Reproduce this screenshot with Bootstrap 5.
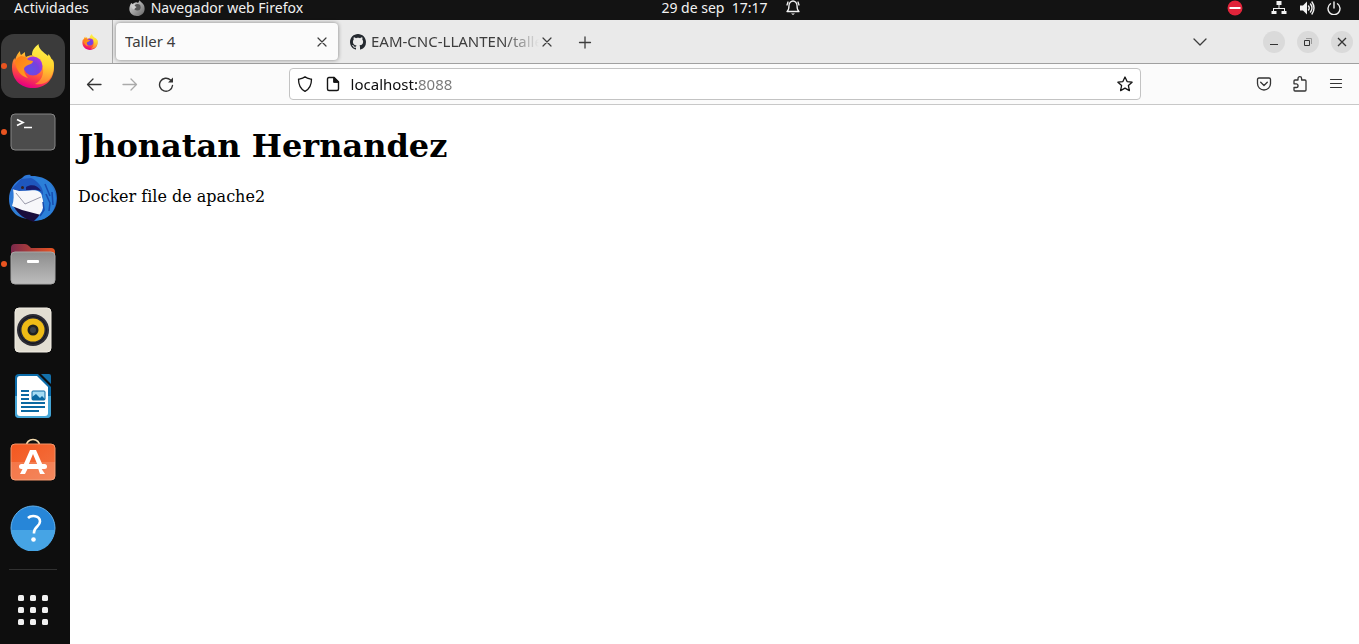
<!DOCTYPE html>
<html lang="es">
<head>
<meta charset="utf-8">
<meta name="viewport" content="width=device-width, initial-scale=1">
<title>Taller 4</title>
<link rel="stylesheet" href="https://cdn.jsdelivr.net/npm/bootstrap@5.3.0/dist/css/bootstrap.min.css">
<style>
  body { font-family: "Noto Sans", "Open Sans", sans-serif; font-size: 14px; background: #0e0e0e; }
  button { border: 0; background: none; padding: 0; color: inherit; display: flex; align-items: center; justify-content: center; }
  svg { display: block; flex: none; }
  .line { fill: none; stroke: currentColor; stroke-linecap: round; stroke-linejoin: round; }

  .topbar { display: grid; grid-template-columns: 1fr auto 1fr; height: 20px; padding: 0 18px 8px 14px; background: #131313; color: #f2f2f2; line-height: 14px; }
  .topbar .clock { gap: 18px; padding-left: 106px; }
  .topbar .app { gap: 6px; margin-left: 40px; }
  .topbar .tray { gap: 12px; }
  .topbar .dnd { margin-right: 16px; }

  .dock { width: 70px; padding-top: 13px; background: #0e0e0e; }
  .dock-item { position: relative; width: 66px; height: 66px; }
  .dock-item.current::before { content: ""; position: absolute; inset: 1px; background: #3b3b3b; border-radius: 13px; }
  .dock-item svg { position: relative; }
  .dock-item.running::after { content: ""; position: absolute; left: 1px; top: 30px; width: 6px; height: 6px; border-radius: 50%; background: #e95420; }
  .dock hr { width: 48px; margin: 8px 0 7px 9px; border-color: #fff; opacity: .15; }

  .window { background: #fff; min-width: 0; }
  .tabstrip { height: 44px; background: #eaeaea; border-bottom: 1px solid #a0a0a0; color: #3d3d3d; font-size: 15px; }
  .pinned { width: 43px; padding-right: 3px; border-right: 1px solid #ababab; }
  .tab { height: 37px; border-radius: 4px; }
  .tab.active { width: 222px; margin-left: 3px; padding: 0 8px 0 9px; background: #fbfbfb; box-shadow: 0 0 4px rgba(0,0,0,.45); }
  .tab.other { width: 217px; padding-left: 12px; gap: 5px; }
  .tab-title { flex: 1; overflow: hidden; white-space: nowrap; }
  .tab.other button { margin-left: -5px; }
  .tab.other .tab-title { -webkit-mask-image: linear-gradient(to left, transparent, #000 36px); mask-image: linear-gradient(to left, transparent, #000 36px); }
  .new-tab { margin-left: 12px; }
  .win-btn { width: 22px; height: 22px; border-radius: 50%; background: #dadada; }
  .tool { width: 36px; height: 36px; }
  .winctl { gap: 12px; padding: 0 6px 0 45px; }

  .toolbar { height: 41px; padding: 0 5px 0 6px; background: #fbfbfb; border-bottom: 1px solid #c8c8c8; color: #333; }
  .spring { flex: 10; }
  .urlbar { flex: 80; height: 32px; padding: 0 7px; background: #fff; border: 1px solid #c3c3c3; border-radius: 4px; gap: 12px; color: #151515; }
  .urlbar input { flex: 1; min-width: 0; border: 0; outline: 0; padding: 0; font-size: 15px; line-height: 20px; margin-left: -2px;
    color: transparent; caret-color: #000; background: linear-gradient(to right, #0c0c0d 66px, #777 66px); -webkit-background-clip: text; background-clip: text; }

  .page { padding: 22px 8px; font-family: "DejaVu Serif", serif; color: #000; font-size: 16px; line-height: 19px; }
  .page h1 { font-size: 32px; line-height: 38px; font-weight: 700; margin-bottom: 22px; }
</style>
</head>
<body class="d-flex flex-column min-vh-100">

<svg width="0" height="0" class="position-absolute" aria-hidden="true">
  <defs>
    <linearGradient id="ffBody" x1=".8" y1=".1" x2=".45" y2="1"><stop offset="0" stop-color="#ffd83a"/><stop offset=".35" stop-color="#ff9a2b"/><stop offset=".65" stop-color="#ff4f3c"/><stop offset="1" stop-color="#e8007f"/></linearGradient>
    <linearGradient id="ffTail" x1=".5" y1="0" x2=".4" y2="1"><stop offset="0" stop-color="#fff34f"/><stop offset=".5" stop-color="#ffd62e"/><stop offset="1" stop-color="#ff7a35"/></linearGradient>
    <radialGradient id="ffGlobe" cx=".4" cy=".7" r=".8"><stop offset="0" stop-color="#5e51e8"/><stop offset=".5" stop-color="#7840dd"/><stop offset="1" stop-color="#b833e1"/></radialGradient>
    <linearGradient id="ffHead" x1="0" y1="0" x2="1" y2="1"><stop offset="0" stop-color="#ff7a16"/><stop offset="1" stop-color="#ffa51f"/></linearGradient>
    <symbol id="firefox" viewBox="0 0 44 44">
      <path fill="url(#ffBody)" d="M1 23c0-4 1-7 2.500-9L4 16c1-4 3-7 5-9 0 2 .500 3 1 4l4-3c0 2 0 4 1 5 3-2 8-2 12-1l6 1 8 2c2 2 2 6 2 8 0 13-9 21-21 21S1 36 1 23z"/>
      <path fill="url(#ffTail)" d="M21 11c0-5 3-8 6.500-11 0 5 5 8 9.500 12l.500-2c2 2 3 5 3.500 7l1-1c2 8 0 15-4 20-4 4-9 5-14 4 6-3 9-9 8-16-1-6-5-9-11-13z"/>
      <circle cx="22" cy="22" r="9.500" fill="url(#ffGlobe)"/>
      <path fill="url(#ffHead)" d="M4 18c1-3 3-5 6-6l5 1 2 3 5 1c0 2-2 3-5 4-2 1-4 2-4 4 0 3 1 6 4 9-8-2-12-9-13-16z"/>
    </symbol>
    <linearGradient id="tbBlue" x1="0" y1="0" x2="1" y2="1"><stop offset="0" stop-color="#2d72d9"/><stop offset=".5" stop-color="#2f7fd5"/><stop offset="1" stop-color="#173f9c"/></linearGradient>
    <linearGradient id="folder"><stop offset="0" stop-color="#7b294c"/><stop offset="1" stop-color="#ea5521"/></linearGradient>
    <linearGradient id="drawer" x2="0" y2="1"><stop offset="0" stop-color="#8c8c8c"/><stop offset="1" stop-color="#bdbdbd"/></linearGradient>
    <linearGradient id="bag" x2="1" y2="1"><stop offset="0" stop-color="#f4571f"/><stop offset="1" stop-color="#f27443"/></linearGradient>
    <linearGradient id="silver" x2="1" y2="1"><stop offset="0" stop-color="#ddd"/><stop offset="1" stop-color="#666"/></linearGradient>
  </defs>
</svg>

<header class="topbar">
  <div class="d-flex align-items-center">
    <button type="button">Actividades</button>
    <button type="button" class="app">
      <svg width="16" height="16" viewBox="0 0 44 44"><path fill="url(#silver)" d="M1 25C1 18 3 14 6 8l4 3 4-3c4-2 8-2 11 0l4-7c3 6 14 8 14 23 0 12-9 20-21 20S1 36 1 25z"/><circle cx="23" cy="20" r="9" fill="#555"/><path fill="#ccc" d="M6 13l12-2-3 5 6 3-8 7c-5-2-7-6-7-13z"/></svg>
      <span>Navegador web Firefox</span>
    </button>
  </div>
  <button type="button" class="clock">
    <span>29 de sep&nbsp; 17:17</span>
    <svg class="line" width="14" height="16" viewBox="0 0 14 16" stroke-width="1.300"><path d="M1 11.500c2-1.500 2-3 2-6C3 3 5 1 7 1s4 2 4 4.500c0 3 0 4.500 2 6zM2 2L1 5M12 2l1 3"/><path d="M5 13.500h4L7 15z" fill="currentColor" stroke="none"/></svg>
  </button>
  <div class="tray d-flex align-items-center justify-content-end">
    <button type="button" class="dnd" aria-label="No molestar"><svg width="16" height="16" viewBox="0 0 16 16"><circle cx="8" cy="8" r="7.500" fill="#e0243a"/><path d="M2.500 8h11" stroke="#fff" stroke-width="2"/></svg></button>
    <button type="button" aria-label="Red"><svg width="16" height="16" viewBox="0 0 16 16" fill="#f2f2f2"><path d="M5.500 1h5v4h-2v3H14v3h1.500v3h-5v-3H13V9H3v2h2.500v3h-5v-3H2V8h5.500V5h-2z"/></svg></button>
    <button type="button" aria-label="Volumen"><svg width="16" height="16" viewBox="0 0 16 16"><path fill="#f2f2f2" d="M1 5.500h3L8 1.500v13l-4-4H1z"/><path class="line" stroke-width="1.400" d="M9.500 6q1.500 2 0 4M11.500 4q3 4 0 8M13 2q4 6 0 12"/></svg></button>
    <button type="button" aria-label="Apagar"><svg class="line" width="14" height="14" viewBox="0 0 14 14" stroke-width="1.400"><path d="M7 1v6M3.500 2.800A6 6 0 1 0 10.500 2.800"/></svg></button>
  </div>
</header>

<div class="d-flex flex-grow-1">
  <nav class="dock d-flex flex-column flex-shrink-0" aria-label="Dock">
    <button type="button" class="dock-item current running" aria-label="Firefox"><svg width="44" height="44"><use href="#firefox"/></svg></button>
    <button type="button" class="dock-item running" aria-label="Terminal"><svg width="46" height="38" viewBox="0 0 46 38"><rect x="1" y="1" width="44" height="36" rx="4" fill="#4c4c4c" stroke="#858585"/><path d="M7 6.500l6 3-6 3M14 14.500h8" fill="none" stroke="#fff" stroke-width="1.700"/></svg></button>
    <button type="button" class="dock-item" aria-label="Thunderbird"><svg width="48" height="48" viewBox="0 0 48 48">
      <path fill="url(#tbBlue)" d="M13 4c2-3 6-4 9-3l-1 1c15-1 27 8 27 22 0 12-7 21-23 23l4-3-5 1C11 46 0 39 0 25 0 16 5 8 13 4z"/>
      <path fill="#1a0d3c" d="M4 31c3 6 8 13 21 17l8-8z"/>
      <path fill="#f7f7fa" d="M4 15C7 16 15 17 23 16c7 0 10 3 10 7 2 5 2 11-1 18L13 36 3 32c2-5 2-12 1-17z"/>
      <path fill="none" stroke="#9a9aaa" d="M7 19l9 11 16-7"/>
      <path fill="#2b7fd8" d="M24 3C36 3 47 12 47 25c0 10-5 18-15 21l-7 1 4-4 4-6c2-5 2-10 1-14-1-7-4-12-10-20z"/>
      <path fill="none" stroke="#174bae" stroke-width="1.500" d="M36 10l5 12M37 20l4 9-1 8M43 18l1 13M34 28l1 8-4 6"/>
      <path fill="#1f57bd" d="M12 5L3 15l7 2c6 0 12-1 16-1 5 0 7 3 8 6 1-8-5-15-12-18z"/>
      <path fill="#181a6b" d="M17 13c5-3 12-2 15 4-5-2-9-1-15-1z"/><circle cx="13.500" cy="13.500" r="1.500" fill="#3a2119"/></svg></button>
    <button type="button" class="dock-item running" aria-label="Archivos"><svg width="46" height="42" viewBox="0 0 46 42"><path fill="url(#folder)" d="M1 16V5q0-4 4-4h10q2 0 4 2l2 2h20q4 0 4 4v8z"/><rect x="1" y="9" width="44" height="32" rx="4" fill="url(#drawer)" stroke="#a7a7a7"/><rect x="17" y="17" width="12" height="3" rx="1" fill="#fff"/></svg></button>
    <button type="button" class="dock-item" aria-label="Rhythmbox"><svg width="38" height="46" viewBox="0 0 38 46"><rect x="1" y="1" width="36" height="44" rx="4" fill="#e2ded2" stroke="#f2eee4"/><circle cx="19" cy="23" r="16" fill="#2c2c35"/><circle cx="19" cy="23" r="13.500" fill="none" stroke="#15151b"/><circle cx="19" cy="23" r="11.500" fill="#eebb16"/><circle cx="19" cy="23" r="5.500" fill="#20211f"/><circle cx="19" cy="23" r="3" fill="#3b4148"/></svg></button>
    <button type="button" class="dock-item" aria-label="LibreOffice Writer"><svg width="38" height="46" viewBox="0 0 38 46"><path fill="#0c6ca9" d="M5 1h19l13 13v27q0 4-4 4H5q-4 0-4-4V5q0-4 4-4z"/><path fill="#45a5d5" d="M1 23v18q0 4 4 4h28q4 0 4-4V23z"/><path fill="#fff" d="M6 3h17l11 11v26q0 3-3 3H6q-3 0-3-3V6q0-3 3-3z"/><path fill="#1470aa" d="M27 1h8q2 0 2 2v8z"/><path stroke="#0b69a2" stroke-width="2" d="M7 18h8M7 22h8M7 26h8M7 30h24M7 34h24M7 38h18"/><rect x="18" y="18" width="13" height="9" rx="1" fill="#a5dcf4" stroke="#0b69a2"/><path fill="#0b69a2" d="M18 27v-3l4-3 4 4 2-2 3 3v1z"/></svg></button>
    <button type="button" class="dock-item" aria-label="Ubuntu Software"><svg width="46" height="50" viewBox="0 0 46 50"><path d="M16 10C16 0 30 0 30 10" fill="none" stroke="#f6dcae" stroke-width="1.700"/><rect x="1" y="7" width="44" height="36" rx="4" fill="url(#bag)" stroke="#f39468"/><path d="M1 25h44v14q0 4-4 4H5q-4 0-4-4z" fill="#fff" opacity=".15"/><path d="M20 13h6l7 16h-5l-5-12-5 12h-5zM31 31l4 6h-5l-2-6zM13 31h5l-3 6h-5z" fill="#fff"/><rect x="9" y="27" width="28" height="5" rx="2.500" fill="#fff"/></svg></button>
    <button type="button" class="dock-item" aria-label="Ayuda"><svg width="46" height="46" viewBox="0 0 46 46"><circle cx="23" cy="23" r="22" fill="#2786d8" stroke="#62b1ec"/><path d="M1.500 25h43a21.500 21.500 0 0 1-43 0z" fill="#46a4e5"/><path d="M18 13c3-3 12-3 12 3.500 0 5-6 5-6 11v1" fill="none" stroke="#fff" stroke-width="2.600"/><circle cx="23.500" cy="34.500" r="2.300" fill="#fff"/></svg></button>
    <hr>
    <button type="button" class="dock-item" aria-label="Mostrar aplicaciones"><svg width="30" height="30" viewBox="0 0 30 30" fill="#f0f0f0"><g id="dots"><rect width="6" height="6" rx="1.500"/><rect x="12" width="6" height="6" rx="1.500"/><rect x="24" width="6" height="6" rx="1.500"/></g><use href="#dots" y="12"/><use href="#dots" y="24"/></svg></button>
  </nav>

  <main class="window flex-grow-1">
    <div class="tabstrip d-flex align-items-center">
      <button type="button" class="pinned align-self-stretch" aria-label="Firefox View"><svg width="16" height="16"><use href="#firefox"/></svg></button>
      <div class="tab active d-flex align-items-center">
        <span class="tab-title">Taller 4</span>
        <button type="button" aria-label="Cerrar pestaña"><svg class="line" width="16" height="16" viewBox="0 0 16 16" stroke-width="1.200"><path d="M4 4l8 8M12 4l-8 8"/></svg></button>
      </div>
      <div class="tab other d-flex align-items-center">
        <svg width="16" height="16" viewBox="0 0 16 16" fill="#24292f"><path d="M8 0C3.580 0 0 3.580 0 8c0 3.540 2.290 6.530 5.470 7.590.4.070.55-.17.55-.38 0-.19-.01-.82-.01-1.490-2.010.37-2.530-.49-2.690-.94-.09-.23-.48-.94-.82-1.130-.28-.15-.68-.52-.01-.53.63-.01 1.080.58 1.230.82.72 1.210 1.870.87 2.330.66.07-.52.28-.87.51-1.070-1.780-.2-3.640-.89-3.640-3.950 0-.87.31-1.590.82-2.150-.08-.2-.36-1.020.08-2.120 0 0 .67-.21 2.200.82.640-.18 1.320-.27 2-.27s1.360.09 2 .27c1.530-1.040 2.200-.82 2.200-.82.440 1.100.16 1.920.08 2.120.51.560.82 1.270.82 2.150 0 3.070-1.870 3.750-3.650 3.950.29.25.54.73.54 1.480 0 1.070-.01 1.930-.01 2.200 0 .21.15.46.55.38A8.010 8.010 0 0 0 16 8c0-4.420-3.580-8-8-8z"/></svg>
        <span class="tab-title">EAM-CNC-LLANTEN/talle</span>
        <button type="button" aria-label="Cerrar pestaña"><svg class="line" width="16" height="16" viewBox="0 0 16 16" stroke-width="1.200"><path d="M4 4l8 8M12 4l-8 8"/></svg></button>
      </div>
      <button type="button" class="tool new-tab" aria-label="Nueva pestaña"><svg class="line" width="16" height="16" viewBox="0 0 16 16" stroke-width="1.300"><path d="M2.500 8.500h11M8 3v11"/></svg></button>
      <button type="button" class="tool ms-auto" aria-label="Listar pestañas"><svg class="line" width="16" height="16" viewBox="0 0 16 16" stroke-width="1.300"><path d="M2 5l6 6 6-6"/></svg></button>
      <div class="winctl d-flex">
        <button type="button" class="win-btn" aria-label="Minimizar"><svg width="12" height="12" viewBox="0 0 12 12"><path d="M2 8.500h8" stroke="#333"/></svg></button>
        <button type="button" class="win-btn" aria-label="Restaurar"><svg width="12" height="12" viewBox="0 0 12 12" fill="none"><path d="M4 2.500h5.500V8" stroke="#999"/><path d="M2.500 4.500h5v5h-5z" stroke="#333"/></svg></button>
        <button type="button" class="win-btn" aria-label="Cerrar"><svg width="12" height="12" viewBox="0 0 12 12"><path d="M2 2l8 8M10 2l-8 8" stroke="#333" stroke-width="1.300"/></svg></button>
      </div>
    </div>

    <div class="toolbar d-flex align-items-center">
      <button type="button" class="tool" aria-label="Atrás"><svg class="line" width="16" height="16" viewBox="0 0 16 16" stroke-width="1.300"><path d="M15 8.500H1.500M7 3L1.500 8.500 7 14"/></svg></button>
      <button type="button" class="tool" aria-label="Adelante"><svg class="line" width="16" height="16" viewBox="0 0 16 16" stroke-width="1.300" opacity=".4"><path d="M1 8.500h13.500M9 3l5.500 5.500L9 14"/></svg></button>
      <button type="button" class="tool" aria-label="Recargar"><svg class="line" width="16" height="16" viewBox="0 0 16 16" stroke-width="1.400"><path d="M12.500 4A6.500 6.500 0 1 0 14.500 9.500"/><path d="M15 1.500V6.500H10z" fill="currentColor" stroke="none"/></svg></button>
      <div class="spring"></div>
      <div class="urlbar d-flex align-items-center">
        <svg class="line" width="16" height="16" viewBox="0 0 16 16" stroke-width="1.300"><path d="M8 .8c2 1.700 4.500 2 6.500 2.400C14.500 9 12.500 13 8 15.300 3.500 13 1.500 9 1.500 3.200 3.500 2.800 6 2.500 8 .8z"/></svg>
        <svg class="line" width="16" height="16" viewBox="0 0 16 16" stroke-width="1.400"><path d="M4 1.500h5L13.500 6v7q0 1.500-1.500 1.500H4q-1.500 0-1.500-1.500V3q0-1.500 1.500-1.500zM9 1.500V6h4.500z"/><path d="M9 1.500V6h4.500z" fill="currentColor"/></svg>
        <input type="text" value="localhost:8088" aria-label="Dirección">
        <button type="button" aria-label="Añadir marcador"><svg class="line" width="16" height="16" viewBox="0 0 16 16" stroke-width="1.300"><path d="M8 1l2.100 4.600 5 .6-3.700 3.400 1 5L8 12.100 3.600 14.600l1-5L.9 6.200l5-.6z"/></svg></button>
      </div>
      <div class="spring"></div>
      <button type="button" class="tool" aria-label="Pocket"><svg class="line" width="16" height="16" viewBox="0 0 16 16" stroke-width="1.300"><path d="M3 2h10q1.500 0 1.500 1.500V7.500a6.500 6.500 0 0 1-13 0V3.500Q1.500 2 3 2zM4.700 6.300L8 9.500l3.300-3.200"/></svg></button>
      <button type="button" class="tool" aria-label="Extensiones"><svg class="line" width="16" height="16" viewBox="0 0 16 16" stroke-width="1.300"><path d="M2 7V5q0-1 1-1h3V2.500a1.800 1.800 0 0 1 3.600 0V4H13q1 0 1 1v9q0 1-1 1H3q-1 0-1-1v-2.500h2.200a1.800 1.800 0 0 0 0-3.700H2z"/></svg></button>
      <button type="button" class="tool" aria-label="Menú"><svg class="line" width="16" height="16" viewBox="0 0 16 16" stroke-width="1.200"><path d="M2.500 3.500h11M2.500 7.500h11M2.500 11.500h11"/></svg></button>
    </div>

    <article class="page">
      <h1>Jhonatan Hernandez</h1>
      <p>Docker file de apache2</p>
    </article>
  </main>
</div>
<script src="https://cdn.jsdelivr.net/npm/bootstrap@5.3.0/dist/js/bootstrap.bundle.min.js"></script>
</body>
</html>
